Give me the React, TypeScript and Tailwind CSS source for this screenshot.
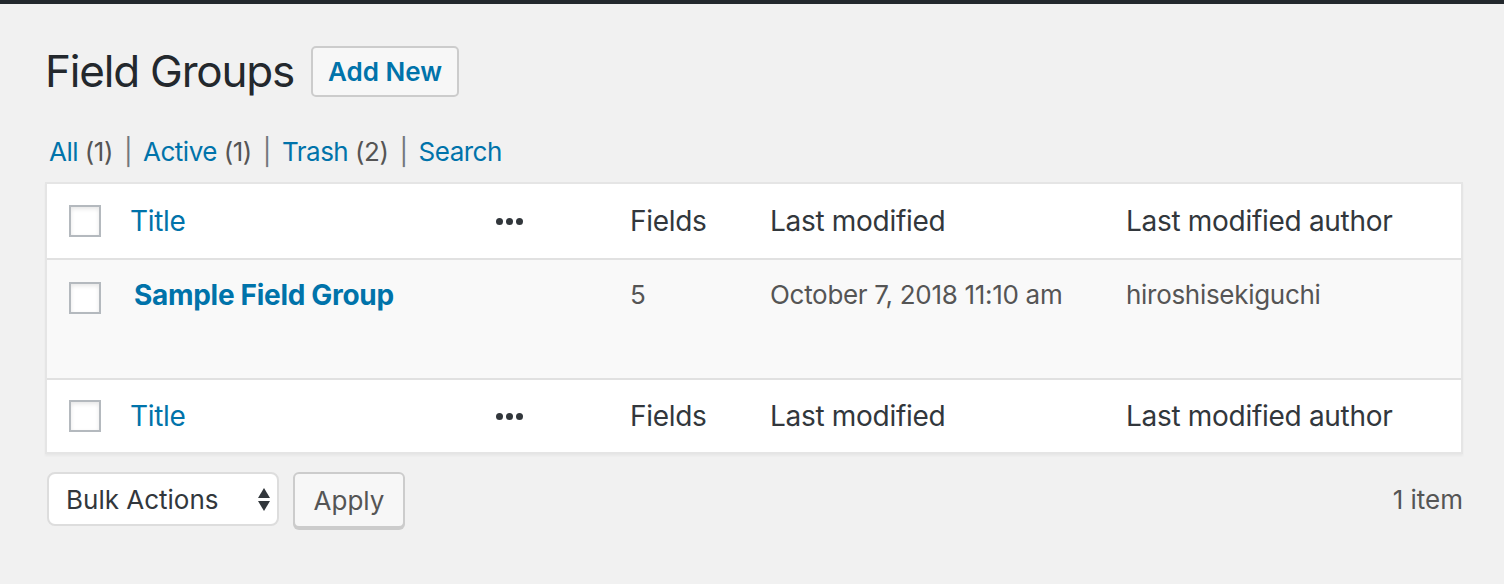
import { ReactNode } from "react";

const font = { fontFamily: "Inter, 'Liberation Sans', sans-serif" };

function Checkbox() {
  return <span className="block w-8 h-8 border-2 border-[#b4b9be] bg-white shadow-[inset_0_2px_4px_rgba(0,0,0,0.1)]" />;
}

function Dots() {
  return (
    <span className="flex gap-[3px] items-center">
      <span className="w-[7px] h-[7px] rounded-full bg-[#32373c]" />
      <span className="w-[7px] h-[7px] rounded-full bg-[#32373c]" />
      <span className="w-[7px] h-[7px] rounded-full bg-[#32373c]" />
    </span>
  );
}

const cols = "grid grid-cols-[67px_366px_134px_140px_356px_1fr]";

function HeadRow({ border, h }: { border: string; h: string }) {
  return (
    <div className={`${cols} ${h} items-center text-[28px] tracking-[-0.3px] text-[#32373c] ${border}`}>
      <div className="pl-[22px]">
        <Checkbox />
      </div>
      <div className="pl-4 text-[#0073aa]">Title</div>
      <div className="pl-4">
        <Dots />
      </div>
      <div className="pl-4">Fields</div>
      <div className="pl-4">Last modified</div>
      <div className="pl-4">Last modified author</div>
    </div>
  );
}

function Sep() {
  return <span className="mx-[11px] text-[#72777c]">|</span>;
}

function Count({ children }: { children: ReactNode }) {
  return <span className="text-[#555]"> {children}</span>;
}

export default function App() {
  return (
    <div className="min-h-[584px] bg-[#f1f1f1] border-t-4 border-[#23282d]" style={font}>
      <div className="pl-[45px] pr-[41px]">
        <div className="flex items-center gap-[17px] pt-[38px]">
          <h1 className="text-[44px] tracking-[-1.2px] font-normal text-[#23282d] leading-[58px]">Field Groups</h1>
          <button className="h-[51px] w-[148px] rounded-[5px] border-2 border-[#ccc] bg-[#f7f7f7] text-[26px] font-semibold text-[#0073aa]">
            Add New
          </button>
        </div>
        <div className="mt-[33px] pl-1 text-[26px] tracking-[-0.5px] text-[#0073aa] leading-[38px]">
          All<Count>(1)</Count>
          <Sep />
          Active<Count>(1)</Count>
          <Sep />
          Trash<Count>(2)</Count>
          <Sep />
          Search
        </div>
        <div className="mt-[11px] border-2 border-[#e5e5e5] bg-white shadow-[0_2px_2px_rgba(0,0,0,0.04)]">
          <HeadRow border="border-b-2 border-[#e1e1e1]" h="h-[76px]" />
          <div className={`${cols} h-[120px] items-start bg-[#f9f9f9] text-[26px] tracking-[-0.3px] text-[#555] border-b-2 border-[#e1e1e1]`}>
            <div className="pl-[22px] pt-[22px]">
              <Checkbox />
            </div>
            <div className="pl-5 pt-[14px] text-[28px] font-bold text-[#0073aa]">Sample Field Group</div>
            <div />
            <div className="pl-4 pt-[15px]">5</div>
            <div className="pl-4 pt-[15px]">October 7, 2018 11:10 am</div>
            <div className="pl-4 pt-[15px]">hiroshisekiguchi</div>
          </div>
          <HeadRow border="" h="h-[72px]" />
        </div>
        <div className="mt-[18px] flex items-start">
          <div className="w-[232px] h-[54px] ml-[2px] rounded-[8px] border-2 border-[#ddd] bg-white flex items-center justify-between pl-[17px] pr-[7px] text-[26px] text-[#32373c]">
            <span>Bulk Actions</span>
            <span className="flex flex-col gap-[3px] items-center">
              <span className="w-0 h-0 border-x-[6px] border-x-transparent border-b-[10px] border-b-[#32373c]" />
              <span className="w-0 h-0 border-x-[6px] border-x-transparent border-t-[10px] border-t-[#32373c]" />
            </span>
          </div>
          <button className="ml-[14px] w-[112px] h-[56px] rounded-[6px] border-2 border-[#ccc] bg-[#f7f7f7] shadow-[0_2px_0_#ccc] text-[26px] text-[#555]">
            Apply
          </button>
          <div className="ml-auto pt-[8px] text-[26px] text-[#555]">1 item</div>
        </div>
      </div>
    </div>
  );
}
